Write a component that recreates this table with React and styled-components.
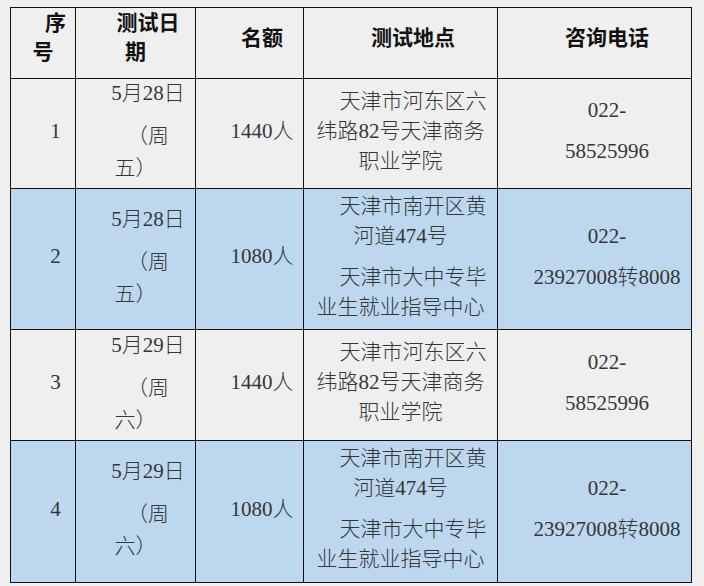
import React from "react";
import styled, { createGlobalStyle } from "styled-components";

const GlobalStyle = createGlobalStyle`
  html, body {
    margin: 0;
    padding: 0;
    background: #efefef;
  }
  body {
    font-family: "Liberation Serif", "Noto Sans CJK SC", serif;
  }
`;

const Page = styled.div`
  width: 704px;
  height: 586px;
  box-sizing: border-box;
  padding: 7px 0 0 10px;
  background: #efefef;
`;

// the black grid lines are the table background showing through the 1px gaps
const Table = styled.div`
  display: grid;
  grid-template-columns: 64px 119px 107px 193px 193px;
  grid-template-rows: 70px 109px 140px 110px 141px;
  gap: 1px;
  padding: 1px;
  width: max-content;
  background: #111;
`;

const Cell = styled.div`
  display: flex;
  flex-direction: column;
  justify-content: center;
  box-sizing: border-box;
  padding-bottom: ${(p) => (p.$head ? 10 : 6)}px;
  background: ${(p) => (p.$blue ? "#bdd7ee" : "#efefef")};
  color: ${(p) => (p.$head ? "#111" : "#363636")};
  font-size: 21px;
  font-weight: ${(p) => (p.$head ? 600 : 300)};
  line-height: ${(p) => p.$lh}px;
  text-align: center;
  white-space: nowrap;
`;

const Para = styled.p`
  margin: 0;
  text-indent: 25px;
  & + & {
    margin-top: ${(p) => p.$gap}px;
  }
`;

const kinds = {
  head: { lh: 29, gap: 0 },
  plain: { lh: 30, gap: 0 },
  date: { lh: 32, gap: 6 },
  addr: { lh: 30, gap: 12 },
  phone: { lh: 30, gap: 11 },
};

const header = [[["序", "号"]], [["测试日", "期"]], [["名额"]], [["测试地点"]], [["咨询电话"]]];

const heping = [["天津市河东区六", "纬路82号天津商务", "职业学院"]];
const nankai = [
  ["天津市南开区黄", "河道474号"],
  ["天津市大中专毕", "业生就业指导中心"],
];

const rows = [
  { no: "1", date: "5月28日", day: "五", seats: "1440人", addr: heping, tel: "58525996" },
  { no: "2", date: "5月28日", day: "五", seats: "1080人", addr: nankai, tel: "23927008转8008", blue: true },
  { no: "3", date: "5月29日", day: "六", seats: "1440人", addr: heping, tel: "58525996" },
  { no: "4", date: "5月29日", day: "六", seats: "1080人", addr: nankai, tel: "23927008转8008", blue: true },
];

const TextCell = ({ kind, paras, blue, head }) => (
  <Cell $lh={kinds[kind].lh} $blue={blue} $head={head}>
    {paras.map((lines, i) => (
      <Para key={i} $gap={kinds[kind].gap}>
        {lines.map((line, j) => (
          <React.Fragment key={j}>
            {j > 0 && <br />}
            {line}
          </React.Fragment>
        ))}
      </Para>
    ))}
  </Cell>
);

export default function App() {
  return (
    <Page>
      <GlobalStyle />
      <Table>
        {header.map((paras, i) => (
          <TextCell key={"h" + i} kind="head" paras={paras} head />
        ))}
        {rows.map((r) => (
          <React.Fragment key={r.no}>
            <TextCell kind="plain" paras={[[r.no]]} blue={r.blue} />
            <TextCell kind="date" paras={[[r.date], ["（周", r.day + "）"]]} blue={r.blue} />
            <TextCell kind="plain" paras={[[r.seats]]} blue={r.blue} />
            <TextCell kind="addr" paras={r.addr} blue={r.blue} />
            <TextCell kind="phone" paras={[["022-"], [r.tel]]} blue={r.blue} />
          </React.Fragment>
        ))}
      </Table>
    </Page>
  );
}
